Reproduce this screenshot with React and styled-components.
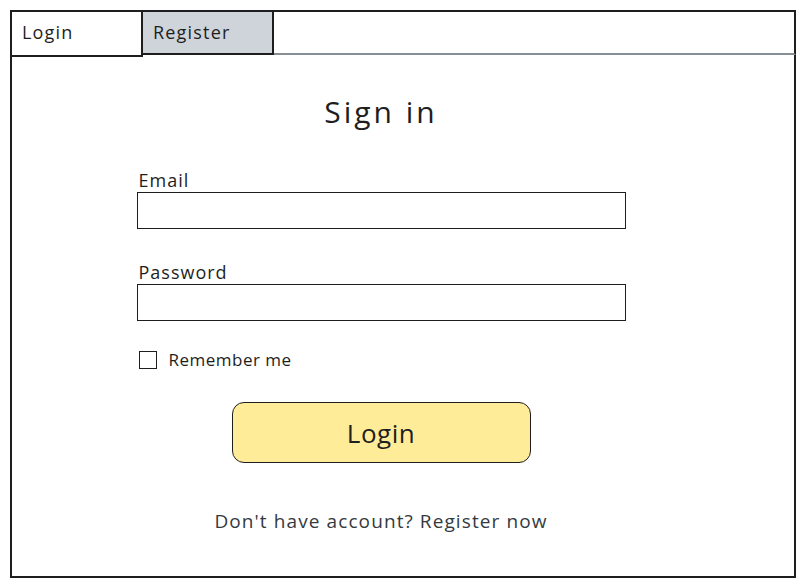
import React from 'react';
import styled, { createGlobalStyle } from 'styled-components';

const GlobalStyle = createGlobalStyle`
  html, body {
    margin: 0;
    padding: 0;
    background: #ffffff;
  }
  body {
    font-family: 'Open Sans', 'Liberation Sans', sans-serif;
    color: #1e1e1e;
  }
`;

const Frame = styled.div`
  box-sizing: border-box;
  width: 786px;
  height: 568px;
  margin: 10px 0 0 10px;
  display: flex;
  flex-direction: column;
`;

const TabBar = styled.div`
  display: flex;
  height: 45px;
  box-sizing: border-box;
`;

const Tab = styled.div`
  box-sizing: border-box;
  width: ${(p) => p.width}px;
  height: ${(p) => (p.active ? 47 : 45)}px;
  border: 2px solid #1e1e1e;
  border-left-width: ${(p) => (p.first ? 2 : 0)}px;
  background: ${(p) => (p.active ? '#ffffff' : '#ced4da')};
  display: flex;
  align-items: center;
  padding-left: 10px;
  padding-bottom: ${(p) => (p.active ? 3 : 1)}px;
  font-size: 18px;
  letter-spacing: 1.2px;
  position: relative;
  z-index: 1;
`;

const TabFill = styled.div`
  flex: 1;
  box-sizing: border-box;
  height: 45px;
  border-top: 2px solid #1e1e1e;
  border-right: 2px solid #1e1e1e;
  border-bottom: 2px solid #868e96;
`;

const Panel = styled.div`
  flex: 1;
  box-sizing: border-box;
  border: 2px solid #1e1e1e;
  border-top: none;
  padding-right: 44px;
  display: flex;
  flex-direction: column;
  align-items: center;
`;

const Title = styled.h1`
  margin: 37px 0 0;
  font-size: 30px;
  font-weight: 400;
  letter-spacing: 3px;
  line-height: 40px;
`;

const Form = styled.div`
  width: 489px;
  margin-top: 38px;
  display: flex;
  flex-direction: column;
`;

const Label = styled.label`
  font-size: 18px;
  letter-spacing: 1px;
  line-height: 20px;
  padding-left: 2px;
  margin-bottom: 2px;
`;

const Input = styled.div`
  box-sizing: border-box;
  height: 37px;
  border: 1.5px solid #1e1e1e;
  margin-bottom: ${(p) => p.gap}px;
`;

const CheckRow = styled.div`
  display: flex;
  align-items: center;
  gap: 12px;
  padding-left: 2px;
  font-size: 17px;
  letter-spacing: 0.5px;
`;

const Box = styled.span`
  box-sizing: border-box;
  width: 18px;
  height: 18px;
  border: 1.5px solid #1e1e1e;
`;

const LoginButton = styled.div`
  box-sizing: border-box;
  width: 299px;
  height: 61px;
  margin-top: 31px;
  border: 1.5px solid #1e1e1e;
  border-radius: 12px;
  background: #ffec99;
  display: flex;
  align-items: center;
  justify-content: center;
  font-size: 26px;
  letter-spacing: 0.5px;
`;

const Footer = styled.div`
  margin-top: 45px;
  font-size: 19px;
  color: #343a40;
  letter-spacing: 1.1px;
`;

export default function App() {
  return (
    <>
      <GlobalStyle />
      <Frame>
        <TabBar>
          <Tab width={133} first active>Login</Tab>
          <Tab width={131}>Register</Tab>
          <TabFill />
        </TabBar>
        <Panel>
          <Title>Sign in</Title>
          <Form>
            <Label>Email</Label>
            <Input gap={33} />
            <Label>Password</Label>
            <Input gap={27} />
            <CheckRow>
              <Box />
              Remember me
            </CheckRow>
          </Form>
          <LoginButton>Login</LoginButton>
          <Footer>Don't have account? Register now</Footer>
        </Panel>
      </Frame>
    </>
  );
}
